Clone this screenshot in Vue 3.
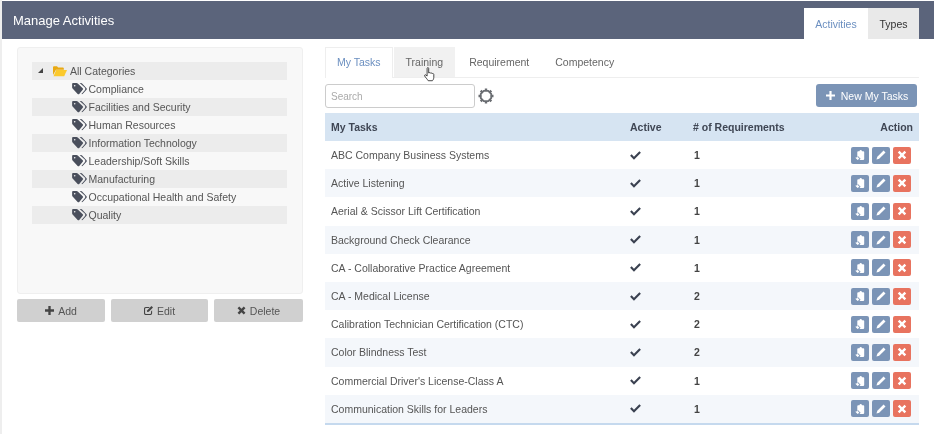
<template>
  <div class="page">
    <header class="topbar">
      <h1 class="title">Manage Activities</h1>
      <nav class="top-tabs">
        <a class="top-tab active">Activities</a>
        <a class="top-tab">Types</a>
      </nav>
    </header>

    <div class="content">
      <aside class="side">
        <div class="tree-box">
          <ul class="tree">
            <li class="tree-row root">
              <svg class="caret" viewBox="0 0 6 6"><path d="M6 0V6H0Z" /></svg>
              <svg class="folder" viewBox="0 0 16 13">
                <path d="M0 2.500C0 1.500.6 1 1.400 1h3.200l1.200 1.400h5.400c.8 0 1.200.4 1.200 1.200V5H3.400L0 11Z" fill="#e9a912" />
                <path d="M3.600 5.400H16l-3.200 7H.6Z" fill="#fbc92c" />
              </svg>
              <span>All Categories</span>
            </li>
            <li v-for="cat in categories" :key="cat" class="tree-row child">
              <svg class="tag" viewBox="0 0 16 13">
                <path d="M0 1.200C0 .5.5 0 1.200 0h3.600c.5 0 1 .2 1.300.5l5.400 5.200c.5.5.5 1.200 0 1.700L7.700 11.800c-.5.5-1.200.5-1.700 0L.5 6C.2 5.700 0 5.200 0 4.700ZM2.800 2.100C2.300 2.100 1.900 2.500 1.900 3s.4.900.9.900.9-.4.900-.9-.4-.9-.9-.9Z" fill-rule="evenodd" />
                <path d="M8.200 0h1.500c.4 0 .8.200 1.100.5l4.800 5.200c.5.5.5 1.200 0 1.700l-4 4.300c-.4.4-1 .5-1.500.2l3.600-4c.8-.9.8-2.100 0-3Z" />
              </svg>
              <span>{{ cat }}</span>
            </li>
          </ul>
        </div>
        <div class="side-actions">
          <button class="side-btn add">
            <svg class="side-icon" viewBox="0 0 10 10"><path d="M3.700 0h2.600v3.700H10v2.600H6.300V10H3.700V6.300H0V3.700h3.700Z" /></svg>
            Add
          </button>
          <button class="side-btn edit">
            <svg class="side-icon" viewBox="0 0 10 10">
              <path d="M2 1h4.500L5.300 2.200H2.200c-.6 0-1 .4-1 1v4.600c0 .6.4 1 1 1h4.600c.6 0 1-.4 1-1V6L9 4.800V8c0 1.200-.8 2-2 2H2c-1.200 0-2-.8-2-2V3c0-1.200.8-2 2-2Z" />
              <path d="M8.300 0 10 1.700 5.300 6.400 3.300 6.800 3.700 4.700Z" />
            </svg>
            Edit
          </button>
          <button class="side-btn delete">
            <svg class="side-icon" viewBox="0 0 10 10"><path d="M2.500.6 5 3.100 7.500.6 9.400 2.500 6.900 5l2.500 2.500-1.900 1.900L5 6.900 2.500 9.400.6 7.500 3.100 5 .6 2.500Z" /></svg>
            Delete
          </button>
        </div>
      </aside>

      <main class="main">
        <nav class="tabs">
          <a v-for="tab in tabs" :key="tab.name" class="tab" :class="tab.cls">{{ tab.name }}</a>
          <svg class="cursor" viewBox="0 0 12 16">
            <path d="M3.400 1.300c0-1.100 1.700-1.100 1.700 0v5l1-.3c.5-.1 1 .2 1 .5l1-.1c.5 0 .8.300.9.600.9-.3 1.700.1 1.700 1v3c0 1.500-.8 3.400-1.600 3.800H4.600C3.500 13 1.500 11 .8 9.700c-.6-1 .6-1.900 1.400-1.100l1.200 1.100Z" fill="#fff" stroke="#222" stroke-width=".9" stroke-linejoin="round" />
          </svg>
        </nav>

        <div class="toolbar">
          <input class="search" type="text" placeholder="Search" />
          <svg class="gear" viewBox="0 0 18 18" fill="none" stroke="#6a6d72">
            <path d="M9 1.500V4M9 14V16.500M1.500 9H4M14 9H16.500M3.700 3.700 5.500 5.500M12.500 12.500 14.300 14.300M3.700 14.300 5.500 12.500M12.500 5.500 14.300 3.700" stroke-width="2.400" />
            <path d="M6.800 3.800H11.200L14.200 6.800V11.200L11.200 14.200H6.800L3.800 11.200V6.800Z" stroke-width="1.800" fill="#fff" />
          </svg>
          <button class="new-btn">
            <svg class="new-icon" viewBox="0 0 10 10"><path d="M3.800 0h2.400v3.800H10v2.400H6.200V10H3.800V6.200H0V3.800h3.800Z" /></svg>
            New My Tasks
          </button>
        </div>

        <table class="grid">
          <thead>
            <tr>
              <th class="c-name">My Tasks</th>
              <th class="c-active">Active</th>
              <th class="c-req">#&nbsp;of Requirements</th>
              <th class="c-action">Action</th>
            </tr>
          </thead>
          <tbody>
            <tr v-for="row in rows" :key="row.name">
              <td class="c-name">{{ row.name }}</td>
              <td class="c-active">
                <svg class="check" viewBox="0 0 12 10"><path d="M4.300 9.700 0 5.400 1.700 3.700 4.300 6.300 10.300.3 12 2Z" /></svg>
              </td>
              <td class="c-req">{{ row.count }}</td>
              <td class="c-action">
                <div class="actions">
                  <button class="act blue">
                    <svg viewBox="0 0 10 10">
                      <path d="M3.200 1.200h1.200C4.600.4 5 0 5.700 0s1.100.4 1.300 1.200h1.300c.5 0 .9.400.9.900V9.100c0 .5-.4.900-.9.900H4.400L5.600 8.700 3.200 6.300 2.300 7.100V2.100c0-.5.400-.9.900-.9Z" />
                      <path d="M.3 7.800 2.800 6.900 4.400 8.700 2.600 10Z" />
                    </svg>
                  </button>
                  <button class="act blue">
                    <svg viewBox="0 0 10 10"><path d="M7.600.5 9.500 2.400 3.200 8.700.5 9.500 1.300 6.800Z" /></svg>
                  </button>
                  <button class="act red">
                    <svg viewBox="0 0 10 10"><path d="M2.500.8 5 3.300 7.500.8 9.200 2.500 6.700 5l2.500 2.500-1.700 1.700L5 6.700 2.500 9.200.8 7.500 3.300 5 .8 2.500Z" /></svg>
                  </button>
                </div>
              </td>
            </tr>
          </tbody>
        </table>
      </main>
    </div>
  </div>
</template>

<script setup>
const categories = [
  "Compliance",
  "Facilities and Security",
  "Human Resources",
  "Information Technology",
  "Leadership/Soft Skills",
  "Manufacturing",
  "Occupational Health and Safety",
  "Quality",
];

const tabs = [
  { name: "My Tasks", cls: "active" },
  { name: "Training", cls: "hover" },
  { name: "Requirement", cls: "" },
  { name: "Competency", cls: "" },
];

const rows = [
  { name: "ABC Company Business Systems", count: 1 },
  { name: "Active Listening", count: 1 },
  { name: "Aerial & Scissor Lift Certification", count: 1 },
  { name: "Background Check Clearance", count: 1 },
  { name: "CA - Collaborative Practice Agreement", count: 1 },
  { name: "CA - Medical License", count: 2 },
  { name: "Calibration Technician Certification (CTC)", count: 2 },
  { name: "Color Blindness Test", count: 2 },
  { name: "Commercial Driver's License-Class A", count: 1 },
  { name: "Communication Skills for Leaders", count: 1 },
];
</script>

<style>
html,
body {
  margin: 0;
  background: #fff;
  overflow: hidden;
}
</style>

<style scoped>
.page {
  width: 936px;
  height: 434px;
  box-sizing: border-box;
  padding: 1px 2px 0 2px;
  font-family: "Liberation Sans", Arial, sans-serif;
  font-size: 10.5px;
  color: #555;
  overflow: hidden;
  background: linear-gradient(to right, #eee 0, #eee 2px, #fff 2px);
  filter: blur(0.3px);
}

.topbar {
  height: 38px;
  background: #5b647b;
  display: flex;
  align-items: flex-end;
  justify-content: space-between;
  padding: 0 15px 0 11px;
}

.title {
  margin: 0;
  align-self: center;
  font-size: 13px;
  font-weight: normal;
  color: #fff;
}

.top-tabs {
  display: flex;
}

.top-tab {
  width: 51px;
  height: 31px;
  display: flex;
  align-items: center;
  justify-content: center;
  background: #e9e9e9;
  color: #333;
}

.top-tab.active {
  width: 64px;
  background: #fff;
  color: #6b8fc0;
}

.content {
  display: flex;
  background: #fff;
  padding: 8px 15px 0 15px;
}

.side {
  width: 286px;
  margin-right: 22px;
}

.tree-box {
  height: 247px;
  box-sizing: border-box;
  padding: 14px 15px 0 14px;
  background: #f8f8f8;
  border: 1px solid #efefef;
  border-radius: 3px;
}

.tree {
  margin: 0;
  padding: 0;
  list-style: none;
}

.tree-row {
  height: 18px;
  box-sizing: border-box;
  padding-bottom: 1px;
  display: flex;
  align-items: center;
  color: #555;
}

.tree-row:nth-child(odd) {
  background: #ececec;
}

.root {
  padding-left: 6px;
}

.caret {
  width: 5px;
  height: 5px;
  margin-right: 10px;
  fill: #444;
}

.folder {
  width: 14px;
  height: 12px;
  margin-right: 3px;
}

.child {
  padding-left: 40px;
}

.tag {
  width: 15px;
  height: 12px;
  margin-right: 1.500px;
  fill: #4a4f5c;
}

.side-actions {
  display: flex;
  gap: 6px;
  margin-top: 5px;
}

.side-btn {
  height: 23px;
  flex: 88 1 0;
  padding: 0;
  border: 0;
  border-radius: 2px;
  background: #d0d0d0;
  color: #555;
  font: inherit;
  display: flex;
  align-items: center;
  justify-content: center;
  gap: 4px;
}

.side-btn.edit {
  flex-grow: 97;
}

.side-btn.delete {
  flex-grow: 89;
}

.side-icon {
  width: 9px;
  height: 9px;
  fill: #444;
}

.main {
  width: 594px;
}

.tabs {
  position: relative;
  height: 31px;
  display: flex;
  border-bottom: 1px solid #eee;
  box-sizing: border-box;
}

.tab {
  height: 29px;
  padding: 0 12px;
  margin-right: 2px;
  display: flex;
  align-items: center;
  color: #666;
}

.tab.active {
  height: 31px;
  box-sizing: border-box;
  padding: 0 11px 2px;
  margin-right: 1px;
  background: #fff;
  color: #6b8fc0;
  border: 1px solid #eee;
  border-bottom: 0;
}

.tab.hover {
  height: 30px;
  padding-bottom: 1px;
  box-sizing: border-box;
  background: #f1f1f1;
}

.cursor {
  position: absolute;
  left: 99px;
  top: 20px;
  width: 11px;
  height: 15px;
}

.toolbar {
  height: 24px;
  margin-top: 6px;
  display: flex;
  align-items: flex-start;
}

.search {
  width: 150px;
  height: 24px;
  box-sizing: border-box;
  padding: 0 5px;
  border: 1px solid #ccc;
  border-radius: 3px;
  font: inherit;
  font-size: 10px;
}

.search::placeholder {
  color: #aaa;
}

.gear {
  width: 18px;
  height: 18px;
  margin: 3px 0 0 2px;
}

.new-btn {
  height: 23px;
  width: 101px;
  margin-left: auto;
  margin-right: 2px;
  padding: 0 0 0 1px;
  border: 0;
  border-radius: 3px;
  background: #7b94b6;
  color: #fff;
  font: inherit;
  display: flex;
  align-items: center;
  justify-content: center;
  gap: 6px;
}

.new-icon {
  width: 9px;
  height: 9px;
  fill: #fff;
}

.grid {
  width: 594px;
  margin-top: 5px;
  border-collapse: collapse;
  table-layout: fixed;
  border-bottom: 2px solid #c5d9ee;
}

.grid th {
  height: 28px;
  padding: 0 6px;
  background: #d6e4f2;
  color: #3f4654;
  font-weight: bold;
  text-align: left;
}

.grid td {
  height: 28.2px;
  padding: 0 6px;
  color: #555;
}

.grid tbody tr:nth-child(even) td {
  background: #f4f7fb;
}

.c-name {
  width: 287px;
}

.c-active {
  width: 51px;
}

.c-req {
  width: 130px;
}

.grid th.c-action {
  text-align: right;
}

.grid td.c-req {
  padding-left: 7px;
  font-weight: bold;
  color: #444;
}

.check {
  display: block;
  width: 11px;
  height: 9px;
  fill: #3a4150;
}

.actions {
  display: flex;
  justify-content: flex-end;
  gap: 3px;
  padding-right: 2px;
}

.act {
  width: 18px;
  height: 17px;
  padding: 0;
  border: 0;
  border-radius: 2px;
  display: flex;
  align-items: center;
  justify-content: center;
}

.act svg {
  width: 10px;
  height: 10px;
  fill: #fff;
}

.act.blue {
  background: #7b94b6;
}

.act.red {
  background: #e8735f;
}
</style>
